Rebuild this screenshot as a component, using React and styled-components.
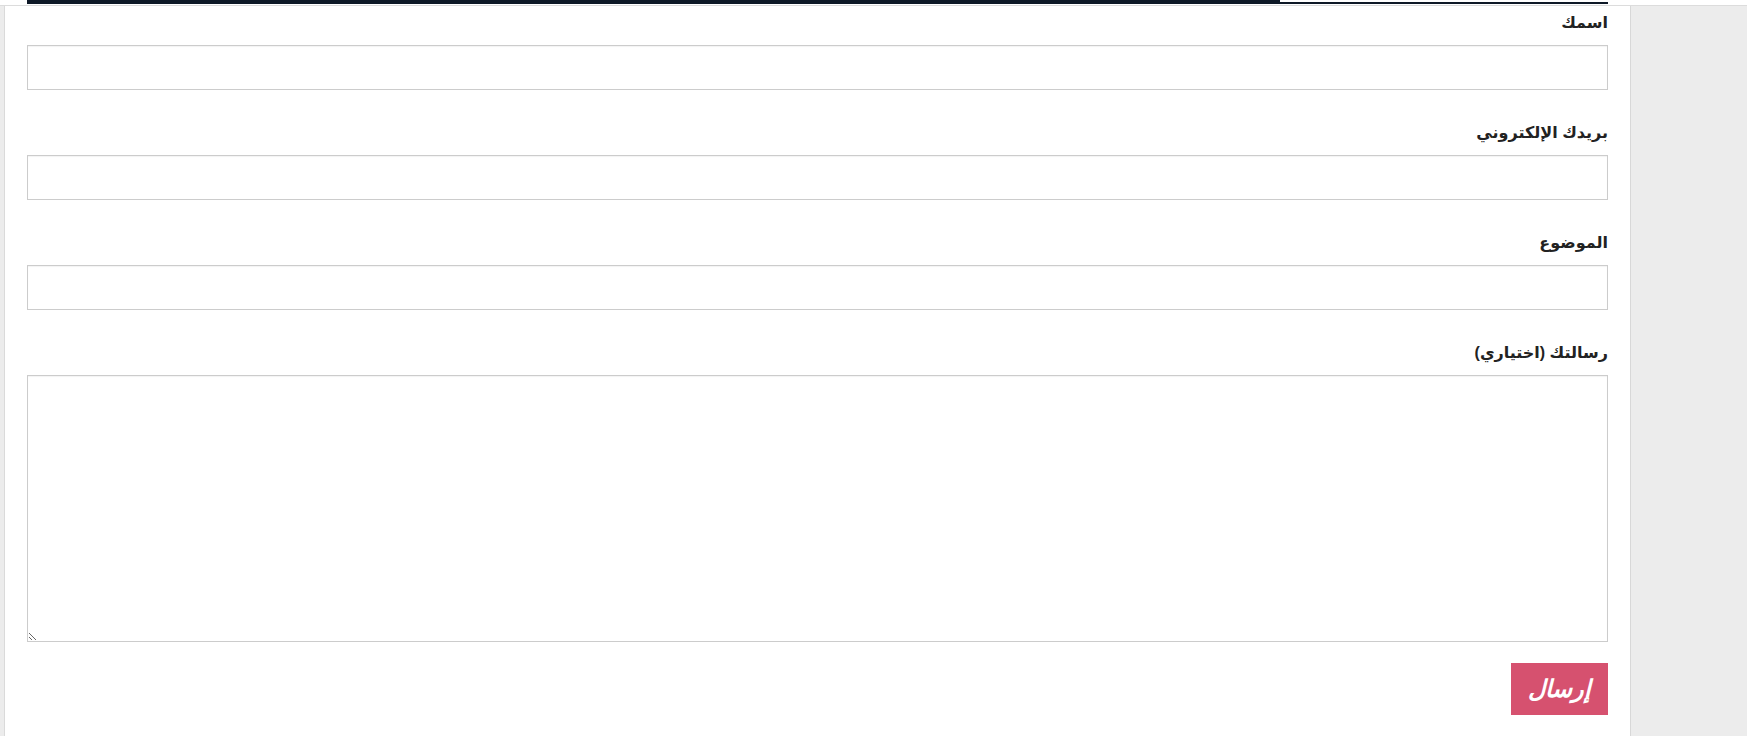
import React from "react";
import styled, { createGlobalStyle } from "styled-components";

const GlobalStyle = createGlobalStyle`
  html, body {
    margin: 0;
    padding: 0;
    background: #ffffff;
  }
  body {
    font-family: "Liberation Sans", "DejaVu Sans", Arial, sans-serif;
    color: #222;
  }
  * {
    box-sizing: border-box;
  }
`;

const fields = [
  { id: "name", label: "اسمك", type: "text" },
  { id: "email", label: "بريدك الإلكتروني", type: "email" },
  { id: "subject", label: "الموضوع", type: "text" },
];

const App = () => {
  const progress = 79.25;

  return (
    <>
      <GlobalStyle />
      <Page>
        <Header>
          <Track>
            <Fill style={{ width: `${progress}%` }} />
            <Rest />
          </Track>
        </Header>
        <Body>
          <LeftRail />
          <Main>
            <Form dir="rtl" onSubmit={(e) => e.preventDefault()}>
              {fields.map((field) => (
                <Field key={field.id}>
                  <Label htmlFor={field.id}>{field.label}</Label>
                  <Input id={field.id} type={field.type} />
                </Field>
              ))}
              <Field>
                <Label htmlFor="message">رسالتك (اختياري)</Label>
                <TextArea id="message" />
              </Field>
              <Actions>
                <Button type="submit">إرسال</Button>
              </Actions>
            </Form>
          </Main>
          <SidePanel />
        </Body>
      </Page>
    </>
  );
};

const Page = styled.div`
  min-height: 736px;
  display: flex;
  flex-direction: column;
`;

const Header = styled.div`
  height: 5px;
  padding: 0 139px 0 27px;
  border-bottom: 1px solid #dcdcdc;
  box-sizing: content-box;
`;

const Track = styled.div`
  height: 4px;
  display: flex;
  align-items: flex-end;
`;

const Fill = styled.div`
  height: 4px;
  background: #0e1927;
`;

const Rest = styled.div`
  flex: 1;
  height: 2px;
  background: #0e1927;
`;

const Body = styled.div`
  flex: 1;
  display: flex;
`;

const LeftRail = styled.div`
  width: 5px;
  background: #ececec;
  border-right: 1px solid #dadada;
`;

const Main = styled.div`
  flex: 1;
  padding: 7px 22px 0 22px;
  background: #ffffff;
`;

const SidePanel = styled.div`
  width: 117px;
  background: #ececec;
  border-left: 1px solid #d8d8d8;
`;

const Form = styled.form`
  display: flex;
  flex-direction: column;
`;

const Field = styled.div`
  display: flex;
  flex-direction: column;
`;

const Label = styled.label`
  font-size: 16px;
  font-weight: bold;
  line-height: 20px;
  margin-bottom: 12px;
  color: #222;
`;

const Input = styled.input`
  height: 45px;
  margin: 0 0 33px 0;
  padding: 6px 10px;
  border: 1px solid #cccccc;
  border-radius: 0;
  box-shadow: inset 0 1px 1px rgba(0, 0, 0, 0.05);
  background: #fff;
  font-size: 15px;
  font-family: inherit;
  outline: none;
`;

const TextArea = styled.textarea`
  height: 267px;
  margin: 0 0 21px 0;
  padding: 6px 10px;
  border: 1px solid #cccccc;
  border-radius: 0;
  box-shadow: inset 0 1px 1px rgba(0, 0, 0, 0.05);
  background: #fff;
  font-size: 15px;
  font-family: inherit;
  resize: vertical;
  outline: none;
`;

const Actions = styled.div`
  display: flex;
  justify-content: flex-start;
`;

const Button = styled.button`
  width: 97px;
  height: 52px;
  padding: 0;
  border: none;
  border-radius: 0;
  background: #d6516f;
  color: #ffffff;
  font-family: inherit;
  font-size: 24px;
  font-weight: bold;
  font-style: italic;
  cursor: pointer;
`;

export default App;
